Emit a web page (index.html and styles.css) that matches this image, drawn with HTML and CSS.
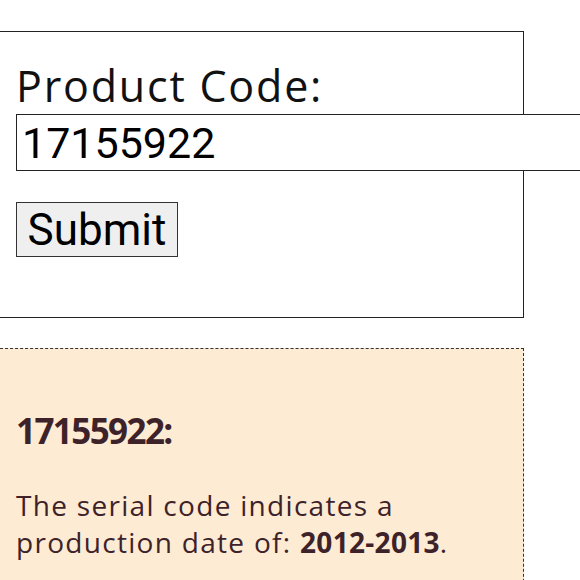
FILE: index.html
```html
<!DOCTYPE html>
<html>
<head>
<meta charset="utf-8">
<link rel="stylesheet" href="styles.css">
</head>
<body>
<div class="page">
  <form class="card">
    <label class="label" for="code">Product Code:</label>
    <input class="field" id="code" type="text" value="17155922">
    <button class="btn" type="button">Submit</button>
  </form>
  <section class="result">
    <h2 class="result-title">17155922:</h2>
    <p class="result-text">The serial code indicates a<br>production date of: <strong>2012-2013</strong>.</p>
  </section>
</div>
</body>
</html>
```
FILE: styles.css
```css
html, body {
  margin: 0;
  padding: 0;
  background: #fff;
  overflow: hidden;
}
.page {
  margin-left: -25px;
  padding-top: 31px;
  width: 549px;
  font-family: "Open Sans", "DejaVu Sans", sans-serif;
}
.card {
  border: 1px solid #222;
  padding: 28px 0 60px 40px;
  display: flex;
  flex-direction: column;
  align-items: flex-start;
  height: 287px;
  box-sizing: border-box;
}
.label {
  font-size: 43px;
  line-height: 52px;
  letter-spacing: 1.8px;
  color: #111;
  font-weight: 400;
}
.field {
  margin-top: 2px;
  width: 620px;
  height: 57px;
  box-sizing: border-box;
  border: 1px solid #222;
  padding: 0 5px;
  font-family: Roboto, "Liberation Sans", sans-serif;
  font-size: 43px;
  color: #000;
  background: #fff;
  outline: none;
  flex: none;
}
.btn {
  margin-top: 31px;
  height: 55px;
  width: 162px;
  box-sizing: border-box;
  border: 1px solid #333;
  background: #efefef;
  padding: 0;
  font-family: Roboto, "Liberation Sans", sans-serif;
  font-size: 44px;
  line-height: 1;
  color: #000;
  border-radius: 0;
}
.result {
  margin-top: 30px;
  border: 1px dashed #333;
  background: #feebd4;
  padding: 61px 0 60px 40px;
  color: #3d2329;
}
.result-title {
  margin: 0;
  font-size: 35px;
  line-height: 42px;
  font-weight: 700;
  letter-spacing: -1.6px;
}
.result-text {
  margin: 35px 0 0;
  font-size: 28px;
  line-height: 37px;
  letter-spacing: 1.3px;
  white-space: nowrap;
}
.result-text strong {
  font-weight: 700;
  letter-spacing: 0.3px;
}
```
